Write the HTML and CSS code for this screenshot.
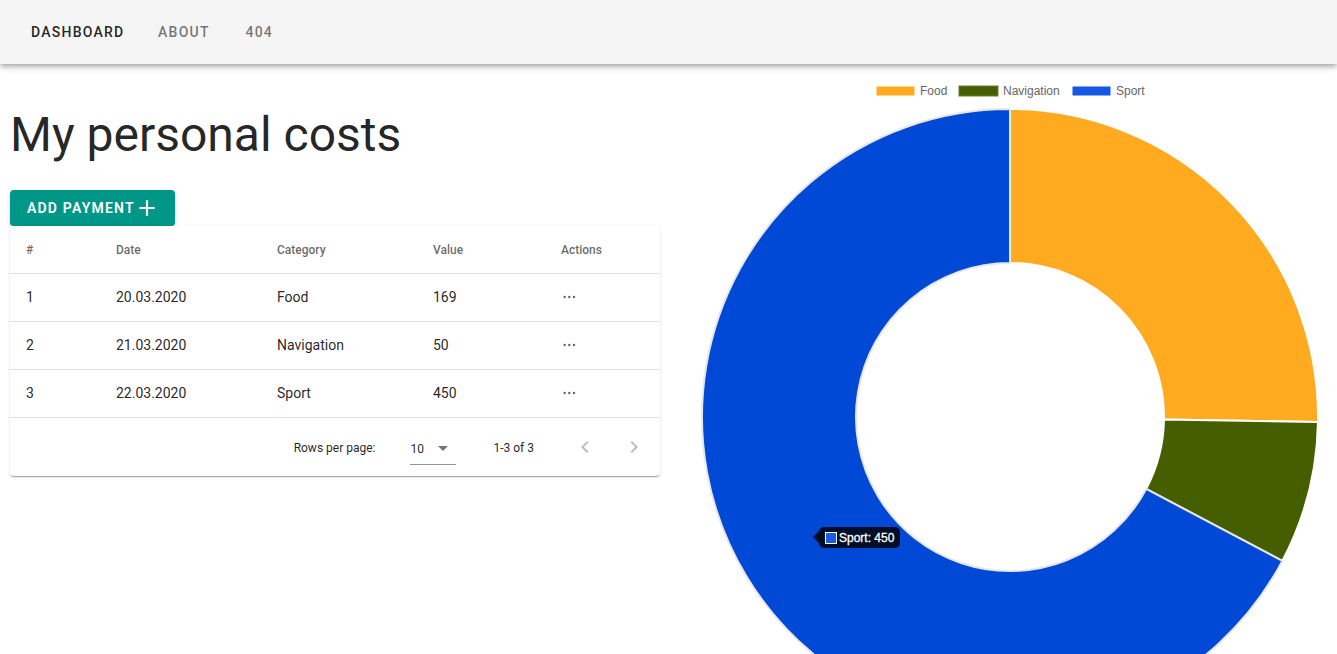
FILE: index.html
```html
<!DOCTYPE html>
<html lang="en">
<head>
<meta charset="utf-8">
<title>My personal costs</title>
<link rel="stylesheet" href="styles.css">
</head>
<body>
<header class="app-bar">
  <nav class="nav">
    <a class="nav-link active">Dashboard</a>
    <a class="nav-link">About</a>
    <a class="nav-link">404</a>
  </nav>
</header>
<main class="main">
  <section class="left">
    <h1 class="title">My personal costs</h1>
    <button class="add-btn">
      <span>Add payment</span>
      <svg class="plus" viewBox="0 0 24 24" width="24" height="24"><path d="M19,13H13V19H11V13H5V11H11V5H13V11H19V13Z" fill="#fff"/></svg>
    </button>
    <div class="card">
      <table class="table">
        <colgroup>
          <col class="c1"><col class="c2"><col class="c3"><col class="c4"><col class="c5">
        </colgroup>
        <thead>
          <tr><th>#</th><th>Date</th><th>Category</th><th>Value</th><th>Actions</th></tr>
        </thead>
        <tbody>
          <tr><td>1</td><td>20.03.2020</td><td>Food</td><td>169</td><td><svg class="dots" width="13" height="4" viewBox="0 0 13 4"><circle cx="1.7" cy="2" r="1.2"/><circle cx="6.3" cy="2" r="1.2"/><circle cx="11" cy="2" r="1.2"/></svg></td></tr>
          <tr><td>2</td><td>21.03.2020</td><td>Navigation</td><td>50</td><td><svg class="dots" width="13" height="4" viewBox="0 0 13 4"><circle cx="1.7" cy="2" r="1.2"/><circle cx="6.3" cy="2" r="1.2"/><circle cx="11" cy="2" r="1.2"/></svg></td></tr>
          <tr><td>3</td><td>22.03.2020</td><td>Sport</td><td>450</td><td><svg class="dots" width="13" height="4" viewBox="0 0 13 4"><circle cx="1.7" cy="2" r="1.2"/><circle cx="6.3" cy="2" r="1.2"/><circle cx="11" cy="2" r="1.2"/></svg></td></tr>
        </tbody>
      </table>
      <div class="footer">
        <span class="rpp">Rows per page:</span>
        <div class="select">
          <span>10</span>
          <svg class="caret" width="10" height="5" viewBox="0 0 10 5"><path d="M0,0 L10,0 L5,5 Z" fill="#757575"/></svg>
        </div>
        <span class="range">1-3 of 3</span>
        <span class="pager-btn"><svg width="24" height="24" viewBox="0 0 24 24"><path d="M15.41,16.58L10.83,12L15.41,7.41L14,6L8,12L14,18L15.41,16.58Z" fill="rgba(0,0,0,0.26)"/></svg></span>
        <span class="pager-btn next"><svg width="24" height="24" viewBox="0 0 24 24"><path d="M8.59,16.58L13.17,12L8.59,7.41L10,6L16,12L10,18L8.59,16.58Z" fill="rgba(0,0,0,0.26)"/></svg></span>
      </div>
    </div>
  </section>
  <section class="right">
    <svg class="chart" width="654" height="590" viewBox="0 0 654 590">
      <g class="legend">
        <rect x="193" y="22" width="39" height="10" fill="#FFAA1F" stroke="#fff" stroke-width="1"/>
        <text x="237" y="31">Food</text>
        <rect x="276" y="22" width="39" height="10" fill="#445E00" stroke="#6b7f33" stroke-width="1"/>
        <text x="320" y="31">Navigation</text>
        <rect x="389" y="22" width="39" height="10" fill="#1258E0" stroke="#fff" stroke-width="1"/>
        <text x="433" y="31">Sport</text>
      </g>
      <path d="M327,45 A308,308 0 0 1 634.96,358.06 L480.98,355.53 A154,154 0 0 0 327,199 Z" fill="#FFAA1F" stroke="#fff" stroke-width="2" stroke-linejoin="bevel"/>
      <path d="M634.96,358.06 A308,308 0 0 1 599.35,496.86 L463.17,424.93 A154,154 0 0 0 480.98,355.53 Z" fill="#445E00" stroke="#fff" stroke-width="2" stroke-linejoin="bevel"/>
      <path d="M599.35,496.86 A308,308 0 1 1 327,45 L327,199 A154,154 0 1 0 463.17,424.93 Z" fill="#0048D6" stroke="#e6e6e6" stroke-width="2" stroke-linejoin="bevel"/>
    </svg>
    <div class="tooltip">
      <span class="tip-swatch"></span>
      <span class="tip-text">Sport: 450</span>
    </div>
  </section>
</main>
</body>
</html>
```

FILE: styles.css
```css
html, body {
  margin: 0;
  padding: 0;
  height: 100%;
  overflow: hidden;
  background: #fff;
}
body {
  font-family: Roboto, "Noto Sans", sans-serif;
  color: rgba(0, 0, 0, 0.87);
}
.app-bar {
  height: 64px;
  background: #f5f5f5;
  box-shadow: 0 2px 4px -1px rgba(0,0,0,.2), 0 4px 5px 0 rgba(0,0,0,.14), 0 1px 10px 0 rgba(0,0,0,.12);
  display: flex;
  align-items: center;
  position: relative;
  z-index: 2;
}
.nav {
  display: flex;
  gap: 1.5px;
  padding-left: 15px;
}
.nav-link {
  display: flex;
  align-items: center;
  justify-content: center;
  min-width: 64px;
  box-sizing: border-box;
  height: 36px;
  padding: 0 16px;
  font-size: 14px;
  font-weight: 500;
  letter-spacing: 1.25px;
  text-transform: uppercase;
  color: rgba(0, 0, 0, 0.54);
}
.nav-link.active {
  color: rgba(0, 0, 0, 0.87);
}
.main {
  display: flex;
  padding-left: 10px;
  gap: 23px;
}
.left {
  width: 650px;
  flex: none;
}
.title {
  margin: 46px 0 30px;
  font-size: 48px;
  line-height: 50px;
  font-weight: 400;
  color: rgba(0, 0, 0, 0.87);
}
.add-btn {
  display: flex;
  align-items: center;
  height: 36px;
  padding: 0 16px 0 17px;
  border: none;
  border-radius: 4px;
  background: #009688;
  color: #fff;
  font-family: Roboto, sans-serif;
  font-size: 14px;
  font-weight: 600;
  letter-spacing: 1.2px;
  text-transform: uppercase;
  box-shadow: 0 3px 1px -2px rgba(0,0,0,.2), 0 2px 2px 0 rgba(0,0,0,.14), 0 1px 5px 0 rgba(0,0,0,.12);
}
.plus {
  display: block;
  margin-left: 0;
  transform: scale(1.1);
}
.card {
  background: #fff;
  border-radius: 0 4px 4px 4px;
  box-shadow: 0 2px 1px -1px rgba(0,0,0,.2), 0 1px 1px 0 rgba(0,0,0,.14), 0 1px 3px 0 rgba(0,0,0,.12);
}
.table {
  width: 650px;
  border-collapse: collapse;
  table-layout: fixed;
}
.c1 { width: 90px; }
.c2 { width: 161px; }
.c3 { width: 156px; }
.c4 { width: 128px; }
.c5 { width: 115px; }
.table th {
  height: 47px;
  padding: 0 16px;
  text-align: left;
  font-size: 12px;
  font-weight: 500;
  color: rgba(0, 0, 0, 0.6);
  border-bottom: 1px solid rgba(0, 0, 0, 0.12);
}
.table td {
  height: 46px;
  padding: 0 16px 1px;
  font-size: 14px;
  color: rgba(0, 0, 0, 0.87);
  border-bottom: 1px solid rgba(0, 0, 0, 0.12);
}
.dots {
  display: block;
  margin-left: 2px;
  fill: #666;
}
.footer {
  height: 58px;
  display: flex;
  align-items: center;
  justify-content: flex-end;
  padding-right: 8px;
  font-size: 12px;
  color: rgba(0, 0, 0, 0.87);
}
.rpp {
  margin-right: 35px;
  padding-top: 2px;
}
.select {
  width: 46px;
  height: 31px;
  box-sizing: border-box;
  display: flex;
  align-items: center;
  justify-content: space-between;
  padding: 0 8px 0 0;
  border-bottom: 1px solid rgba(0, 0, 0, 0.42);
  margin-top: 4px;
}
.range {
  margin-left: 37px;
  margin-right: 33px;
  padding-top: 2px;
}
.pager-btn {
  width: 36px;
  height: 36px;
  display: flex;
  align-items: center;
  justify-content: center;
}
.pager-btn.next {
  margin-left: 13px;
}
.right {
  flex: 1;
  position: relative;
}
.chart {
  display: block;
}
.legend text {
  font-family: "Liberation Sans", Arial, sans-serif;
  font-size: 12px;
  fill: #666;
}
.tooltip {
  position: absolute;
  left: 136px;
  top: 463px;
  height: 21px;
  display: flex;
  align-items: center;
  padding: 0 6px;
  background: rgba(0, 0, 0, 0.82);
  border-radius: 5px;
  color: #fff;
  font-family: "Liberation Sans", Arial, sans-serif;
  font-size: 12px;
  font-weight: 400;
  -webkit-text-stroke: 0.3px #fff;
}
.tooltip::before {
  content: "";
  position: absolute;
  left: -6px;
  top: 4px;
  border-style: solid;
  border-width: 6px 6px 6px 0;
  border-color: transparent rgba(0, 0, 0, 0.82) transparent transparent;
}
.tip-swatch {
  width: 10px;
  height: 10px;
  background: #1C5BE3;
  border: 1px solid #fff;
  margin-right: 2px;
}
.tip-text {
  line-height: 12px;
}
```
